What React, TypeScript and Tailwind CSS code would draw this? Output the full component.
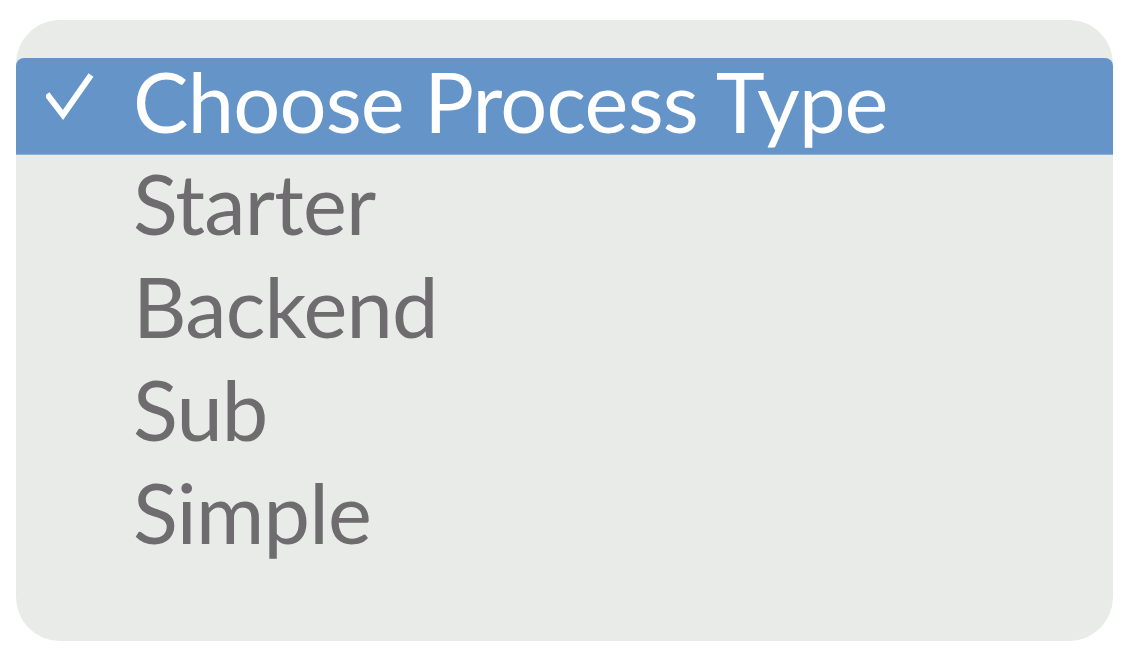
export default function App() {
  const options = ["Starter", "Backend", "Sub", "Simple"];

  return (
    <div className="min-h-screen bg-white pt-[20px] pl-[16px]">
      <div
        className="w-[1097px] h-[621px] rounded-[44px] bg-[#e9ebe8] pt-[38px]"
        style={{ fontFamily: 'Lato, "Open Sans", sans-serif' }}
      >
        <div className="flex h-[97px] rounded-t-[8px] bg-[#6594c8] border-b border-[#8fb0d8] text-white">
          <div className="w-[117px] pl-[30px] pt-[15px]">
            <svg width="50" height="48" viewBox="0 0 50 48" fill="none">
              <path
                d="M1 21 L17 42 L45 2"
                stroke="white"
                strokeWidth="6"
                strokeLinecap="butt"
                strokeLinejoin="miter"
              />
            </svg>
          </div>
          <div className="text-[83px] leading-[87px] tracking-[-0.8px] pb-[10px]">Choose Process Type</div>
        </div>
        <div className="mt-[-3px] pl-[117px] text-[#6e6c6f]">
          {options.map((o) => (
            <div key={o} className="text-[83px] leading-[103px] tracking-[-0.8px]">
              {o}
            </div>
          ))}
        </div>
      </div>
    </div>
  );
}
